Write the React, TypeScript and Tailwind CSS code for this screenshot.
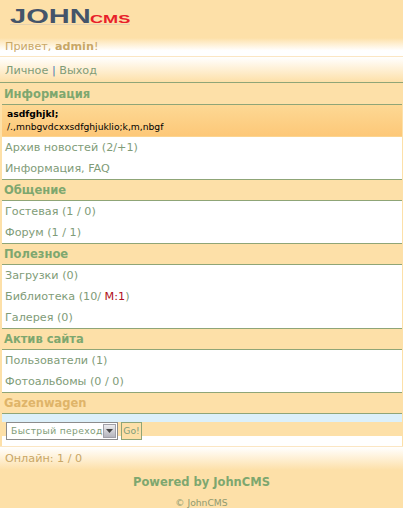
const sans = "font-['DejaVu_Sans',sans-serif]";

function Header({ children, gold = false, first = false }: { children: React.ReactNode; gold?: boolean; first?: boolean }) {
  return (
    <div className={`pl-1 text-[11.5px] leading-[20px] font-bold ${first ? "pt-px" : ""} ${gold ? "text-[#dfb469]" : "text-[#7ea76f]"}`}>
      {children}
    </div>
  );
}

function Item({ children }: { children: React.ReactNode }) {
  return <div className="h-[21px] pl-[3px] text-[11.2px] leading-[21px] text-[#7f9c78]">{children}</div>;
}

function List({ children }: { children: React.ReactNode }) {
  return <div className="ml-[2px] mr-px border-y border-[#8fa577] bg-white">{children}</div>;
}

export default function App() {
  return (
    <div className={`h-[508px] w-[403px] overflow-hidden bg-[#fde0a8] ${sans}`}>
      {/* logo */}
      <div className="h-[38px] pl-[10px] pt-[8px]">
        <div className="flex h-[17px] w-[120px] items-end border-b border-[#e3d0ae] font-['Liberation_Sans',sans-serif] font-bold">
          <span className="block w-[80px] origin-bottom-left scale-x-[1.45] text-[20px] leading-[16px] text-[#44546a]">JOHN</span>
          <span className="block origin-bottom-left scale-x-[1.65] text-[11px] leading-[10px] text-[#e8202a]">CMS</span>
        </div>
      </div>

      <div className="h-[19px] border-b border-[#fbe6c3] bg-gradient-to-b from-[#fde0a8] to-white to-70% pl-[5px] pt-px text-[11.2px] leading-[16px] text-[#c9a766]">
        Привет, <b>admin</b>!
      </div>
      <div className="h-[25px] bg-gradient-to-b from-white to-[#fde0a8] pl-[5px] pt-[6px] text-[11.2px] leading-[16px] text-[#7f9c78]">
        Личное <span className="text-[#4a7ab0]">|</span> Выход
      </div>

      <div className="h-px bg-[#8fa577]" />
      <Header first>Информация</Header>
      <List>
        <div className="h-[32px] border-b border-[#fbd490] bg-gradient-to-b from-[#fdd894] to-[#fdc878] pl-[5px] pt-[2px] text-[9.2px] leading-[13px] text-black">
          <b>asdfghjkl;</b>
          <div>/.,mnbgvdcxxsdfghjuklio;k,m,nbgf</div>
        </div>
        <Item>Архив новостей (2/+1)</Item>
        <Item>Информация, FAQ</Item>
      </List>
      <Header>Общение</Header>
      <List>
        <Item>Гостевая (1 / 0)</Item>
        <Item>Форум (1 / 1)</Item>
      </List>
      <Header>Полезное</Header>
      <List>
        <Item>Загрузки (0)</Item>
        <Item>
          Библиотека (10/ <span className="text-[#b01020]">М:1</span>)
        </Item>
        <Item>Галерея (0)</Item>
      </List>
      <Header>Актив сайта</Header>
      <List>
        <Item>Пользователи (1)</Item>
        <Item>Фотоальбомы (0 / 0)</Item>
      </List>
      <Header gold>Gazenwagen</Header>

      <div className="ml-[2px] mr-px border-t border-[#8fa577]">
        <div className="h-[8px] bg-[#dcf0fa]" />
        <div className="flex h-[14px] items-start gap-[3px] pl-1">
          <div className="flex h-[18px] w-[112px] items-center justify-between border border-[#8c8c8c] bg-white pl-[4px] pr-px text-[9.2px] whitespace-nowrap tracking-[0.35px] text-[#7f9c78]">
            Быстрый переход
            <span className="flex h-[14px] w-[14px] items-center justify-center border border-[#a0a0a8] bg-gradient-to-b from-[#ececee] to-[#b4b4bc]">
              <svg width="7" height="4" viewBox="0 0 7 4"><path d="M0 0h7L3.5 4z" fill="#444" /></svg>
            </span>
          </div>
          <div className="flex h-[18px] w-[21px] items-center justify-center border border-[#8fa577] bg-[#fde0a8] text-[9.2px] text-[#7f9c78]">Go!</div>
        </div>
        <div className="h-[10px] bg-white" />
      </div>

      <div className="h-[24px] border-t border-[#fbe6c3] bg-gradient-to-b from-white to-[#fde0a8] pl-[5px] text-[11.2px] leading-[23px] text-[#c9a766]">
        Онлайн: 1 / 0
      </div>
      <div className="mt-[4px] text-center text-[11.5px] leading-[16px] font-bold text-[#7ea76f]">Powered by JohnCMS</div>
      <div className="mt-[7px] text-center text-[9.2px] leading-[12px] text-[#8f9a70]">© JohnCMS</div>
    </div>
  );
}
